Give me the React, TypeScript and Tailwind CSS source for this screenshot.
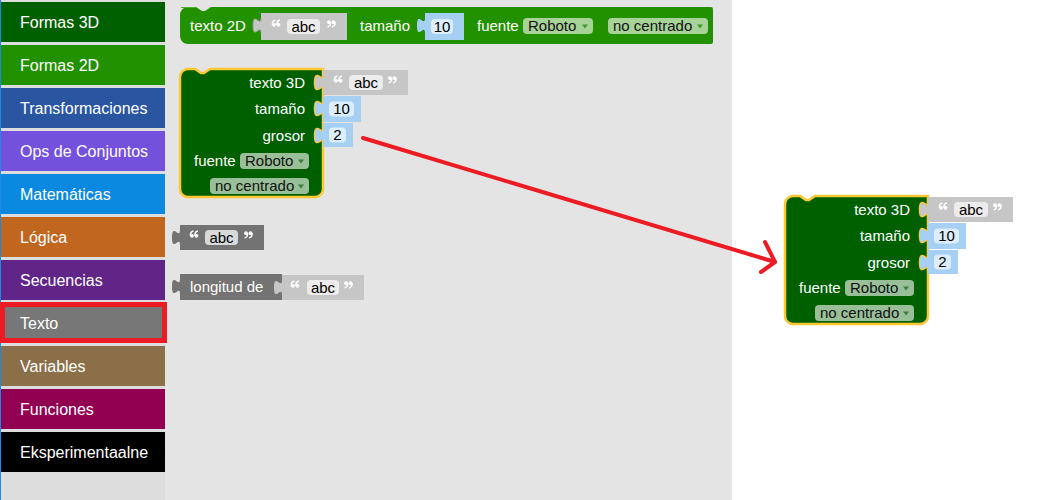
import React from "react";

const FONT = '"Liberation Sans", Arial, sans-serif';
const YELLOW = "#fdc734";
const GRAY_IN = "#c6c6c6";
const BLUE_IN = "#a6d0f3";

const categories = [
  { name: "Formas 3D", cls: "bg-[#006000]" },
  { name: "Formas 2D", cls: "bg-[#229100]" },
  { name: "Transformaciones", cls: "bg-[#2a56a1]" },
  { name: "Ops de Conjuntos", cls: "bg-[#7451dc]" },
  { name: "Matemáticas", cls: "bg-[#0b88e0]" },
  { name: "Lógica", cls: "bg-[#c0661f]" },
  { name: "Secuencias", cls: "bg-[#612588]" },
  { name: "Texto", cls: "bg-[#777777]", marked: true },
  { name: "Variables", cls: "bg-[#8a6f48]" },
  { name: "Funciones", cls: "bg-[#920052]" },
  { name: "Eksperimentaalne", cls: "bg-black" },
];

type TProps = { x: number; cy: number; children: React.ReactNode; anchor?: "start" | "end" | "middle"; fill?: string };

function T({ x, cy, children, anchor = "start", fill = "#fff" }: TProps) {
  return (
    <text x={x} y={cy + 5} fill={fill} fontSize={15} fontFamily={FONT} textAnchor={anchor}>
      {children}
    </text>
  );
}

// quote marks drawn like Blockly's little quote images (66 / 99)
function Q({ x, cy, open }: { x: number; cy: number; open: boolean }) {
  const y = cy - 3;
  const mark = (mx: number) =>
    open ? (
      <g key={mx}>
        <circle cx={mx} cy={y + 1.3} r={1.9} />
        <path d={`M ${mx - 1.6} ${y + 1.4} Q ${mx - 1.8} ${y - 2.6} ${mx + 1.4} ${y - 3.4}`} fill="none" stroke="#fff" strokeWidth={1.5} />
      </g>
    ) : (
      <g key={mx}>
        <circle cx={mx} cy={y - 1.3} r={1.9} />
        <path d={`M ${mx + 1.6} ${y - 1.4} Q ${mx + 1.8} ${y + 2.6} ${mx - 1.4} ${y + 3.4}`} fill="none" stroke="#fff" strokeWidth={1.5} />
      </g>
    );
  return <g fill="#fff">{[x + 2, x + 6.5].map(mark)}</g>;
}

// block with an output tab on its left edge
const childPath = (x: number, y: number, w: number, h: number) =>
  `M ${x} ${y} V ${y + 5} c 0,10 -8,-8 -8,7.5 s 8,-2.5 8,7.5 V ${y + h} H ${x + w} V ${y} Z`;

function Pill({ x, cy, w, fill, label, h = 15 }: { x: number; cy: number; w: number; fill: string; label: string; h?: number }) {
  return (
    <g>
      <rect x={x} y={cy - h / 2} width={w} height={h} rx={4} fill={fill} />
      <T x={x + w / 2} cy={cy} anchor="middle" fill="#000">{label}</T>
    </g>
  );
}

function Dropdown({ x, cy, w, fill, label, arrow }: { x: number; cy: number; w: number; fill: string; label: string; arrow: string }) {
  return (
    <g>
      <rect x={x} y={cy - 8} width={w} height={16} rx={4} fill={fill} />
      <T x={x + 5} cy={cy} fill="#111">{label}</T>
      <path d={`M ${x + w - 11} ${cy - 1.5} h 6 l -3 4 Z`} fill={arrow} />
    </g>
  );
}

function StringIn({ x, y, w, h, fill = GRAY_IN, pill = "#ececec", q1, px, pw, q2 }: { x: number; y: number; w: number; h: number; fill?: string; pill?: string; q1: number; px: number; pw: number; q2: number }) {
  const cy = y + h / 2;
  return (
    <g>
      <path d={childPath(x, y, w, h)} fill={fill} />
      <Q x={x + q1} cy={cy} open />
      <Pill x={x + px} cy={cy} w={pw} fill={pill} label="abc" />
      <Q x={x + q2} cy={cy} open={false} />
    </g>
  );
}

function NumIn({ x, y, w, h, pw, label }: { x: number; y: number; w: number; h: number; pw: number; label: string }) {
  return (
    <g>
      <path d={childPath(x, y, w, h)} fill={BLUE_IN} />
      <Pill x={x + 6} cy={y + h / 2} w={pw} fill="#dcedfb" label={label} />
    </g>
  );
}

const cut = (y: number) => `V ${y + 5} c 0,10 -8,-8 -8,7.5 s 8,-2.5 8,7.5`;

function Block3D({ x, y }: { x: number; y: number }) {
  const body = `M 1 9 A 8 8 0 0 1 9 1 H 16 l 6 4 h 3 l 6 -4 H 144 ${cut(2)} ${cut(28)} ${cut(55)} V 121 A 8 8 0 0 1 136 129 H 9 A 8 8 0 0 1 1 121 Z`;
  return (
    <g transform={`translate(${x} ${y})`}>
      <path d={body} fill="#006000" stroke={YELLOW} strokeWidth={2.5} />
      <T x={126} cy={15} anchor="end">texto 3D</T>
      <T x={126} cy={41} anchor="end">tamaño</T>
      <T x={126} cy={68} anchor="end">grosor</T>
      <T x={15} cy={93}>fuente</T>
      <Dropdown x={61} cy={93} w={69} fill="#99bf99" label="Roboto" arrow="#3f7a3f" />
      <Dropdown x={31} cy={118} w={99} fill="#99bf99" label="no centrado" arrow="#3f7a3f" />
      <StringIn x={144} y={2} w={85} h={25} q1={11} px={26} pw={34} q2={65} />
      <NumIn x={144} y={28} w={38} h={26} pw={25} label="10" />
      <NumIn x={144} y={55} w={30} h={24} pw={17} label="2" />
    </g>
  );
}

function Block2D() {
  const body = "M 0 8 A 8 8 0 0 1 8 0 H 16 l 6 4 h 3 l 6 -4 H 531 A 2 2 0 0 1 533 2 V 35 A 2 2 0 0 1 531 37 H 8 A 8 8 0 0 1 0 29 Z";
  return (
    <g transform="translate(180 7)">
      <path d={body} fill="#229100" />
      <path d="M 16 0.5 H 1" stroke="#4fb02f" strokeWidth={1} />
      <T x={10} cy={19}>texto 2D</T>
      <StringIn x={81} y={6} w={86} h={27} q1={11} px={26} pw={33} q2={66} />
      <path d="M 81 11 c 0,10 -8,-8 -8,7.5 s 8,-2.5 8,7.5" fill="none" stroke="#9a9a9a" strokeWidth={1} />
      <T x={180} cy={19}>tamaño</T>
      <NumIn x={245} y={6} w={39} h={27} pw={22} label="10" />
      <T x={297} cy={19}>fuente</T>
      <Dropdown x={343} cy={19} w={70} fill="#a7d399" label="Roboto" arrow="#3c9a2c" />
      <Dropdown x={428} cy={19} w={100} fill="#a7d399" label="no centrado" arrow="#3c9a2c" />
    </g>
  );
}

function TextBlocks() {
  return (
    <>
      <g transform="translate(172 225)">
        <path d={childPath(8, 0, 84, 25)} fill="#737373" />
        <Q x={18} cy={12.5} open />
        <Pill x={33} cy={12.5} w={33} fill="#d9d9d9" label="abc" />
        <Q x={72} cy={12.5} open={false} />
      </g>
      <g transform="translate(172 274)">
        <path d={childPath(8, 0, 102, 26)} fill="#737373" />
        <T x={18} cy={13}>longitud de</T>
        <StringIn x={110} y={1} w={82} h={25} q1={9} px={25} pw={32} q2={62} />
      </g>
    </>
  );
}

export default function App() {
  return (
    <div className="relative flex w-[1053px] h-[500px] overflow-hidden bg-white" style={{ fontFamily: FONT }}>
      <div className="w-[165px] h-full shrink-0 bg-[#dddddd] border-l border-[#1e88e5] flex flex-col gap-[3px] pt-[2px]">
        {categories.map((c) => (
          <div key={c.name} className={`relative h-[40px] shrink-0 flex items-center pl-[19px] pt-[1px] text-[16px] text-white ${c.cls}`}>
            {c.marked && <span className="absolute -left-px -top-px -right-[2px] bottom-0 border-[5px] border-[#ed1c24]" />}
            <span className="relative">{c.name}</span>
          </div>
        ))}
      </div>
      <div className="w-[567px] h-full shrink-0 bg-[#e4e4e4]" />
      <div className="flex-1 h-full" />

      <svg className="absolute inset-0 pointer-events-none" width={1053} height={500}>
        <Block2D />
        <Block3D x={179} y={68} />
        <TextBlocks />
        <Block3D x={784} y={195} />
        <g stroke="#ed1c24" strokeWidth={4} strokeLinecap="round" fill="none">
          <line x1={363} y1={138} x2={775} y2={262} />
          <polyline points="765,242 775,262 761,272" strokeLinejoin="round" />
        </g>
      </svg>
    </div>
  );
}
